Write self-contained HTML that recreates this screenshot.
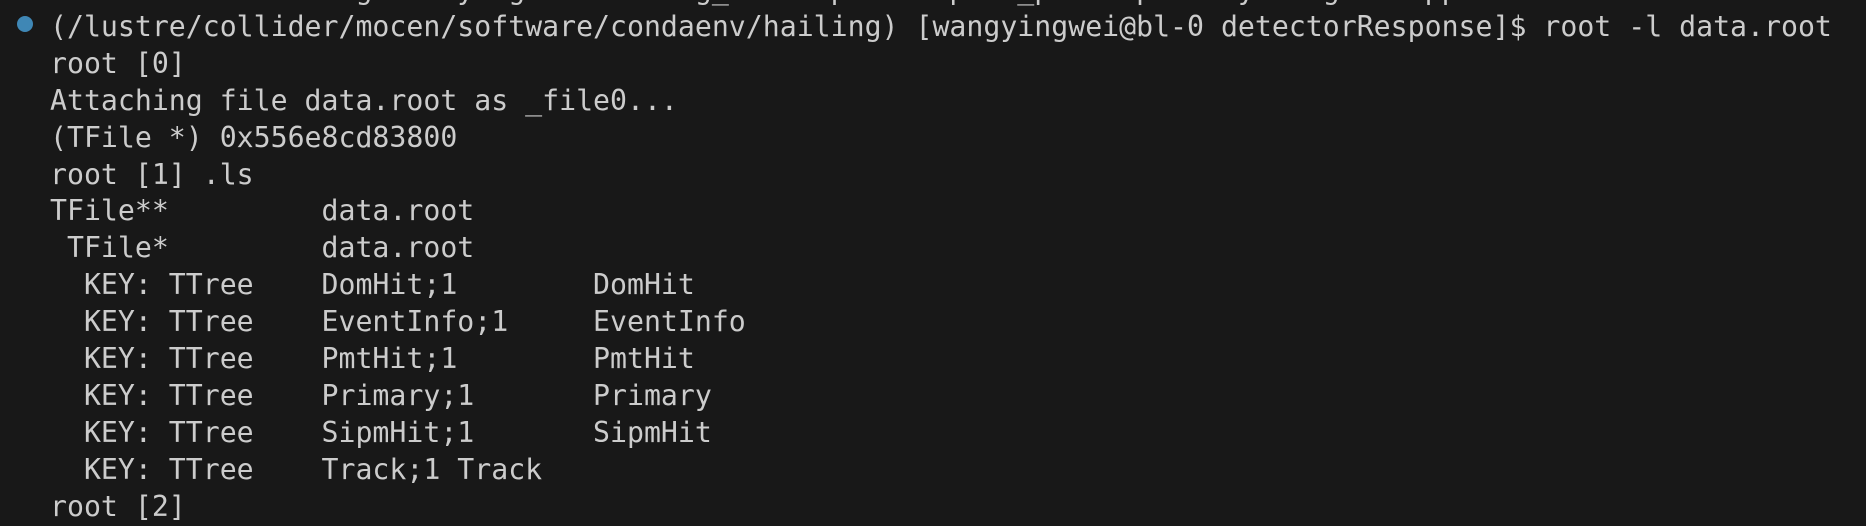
<!DOCTYPE html>
<html><head><style>
html,body{margin:0;padding:0;background:#181818;width:1866px;height:498px;overflow:hidden}
pre{position:absolute;left:50px;top:-28px;margin:0;font-family:"DejaVu Sans Mono","Liberation Mono",monospace;font-size:28.2px;line-height:36.9px;color:#cccccc}
.dot{position:absolute;left:17px;top:16px;width:16px;height:16px;border-radius:50%;background:#3f87b5}
</style></head><body>
<div class="dot"></div>
<pre>                  g     y  g          g_      p      p   _p     p     y    g     pp
(/lustre/collider/mocen/software/condaenv/hailing) [wangyingwei@bl-0 detectorResponse]$ root -l data.root
root [0]
Attaching file data.root as _file0...
(TFile *) 0x556e8cd83800
root [1] .ls
TFile**         data.root
 TFile*         data.root
  KEY: TTree    DomHit;1        DomHit
  KEY: TTree    EventInfo;1     EventInfo
  KEY: TTree    PmtHit;1        PmtHit
  KEY: TTree    Primary;1       Primary
  KEY: TTree    SipmHit;1       SipmHit
  KEY: TTree    Track;1 Track
root [2]</pre>
</body></html>
